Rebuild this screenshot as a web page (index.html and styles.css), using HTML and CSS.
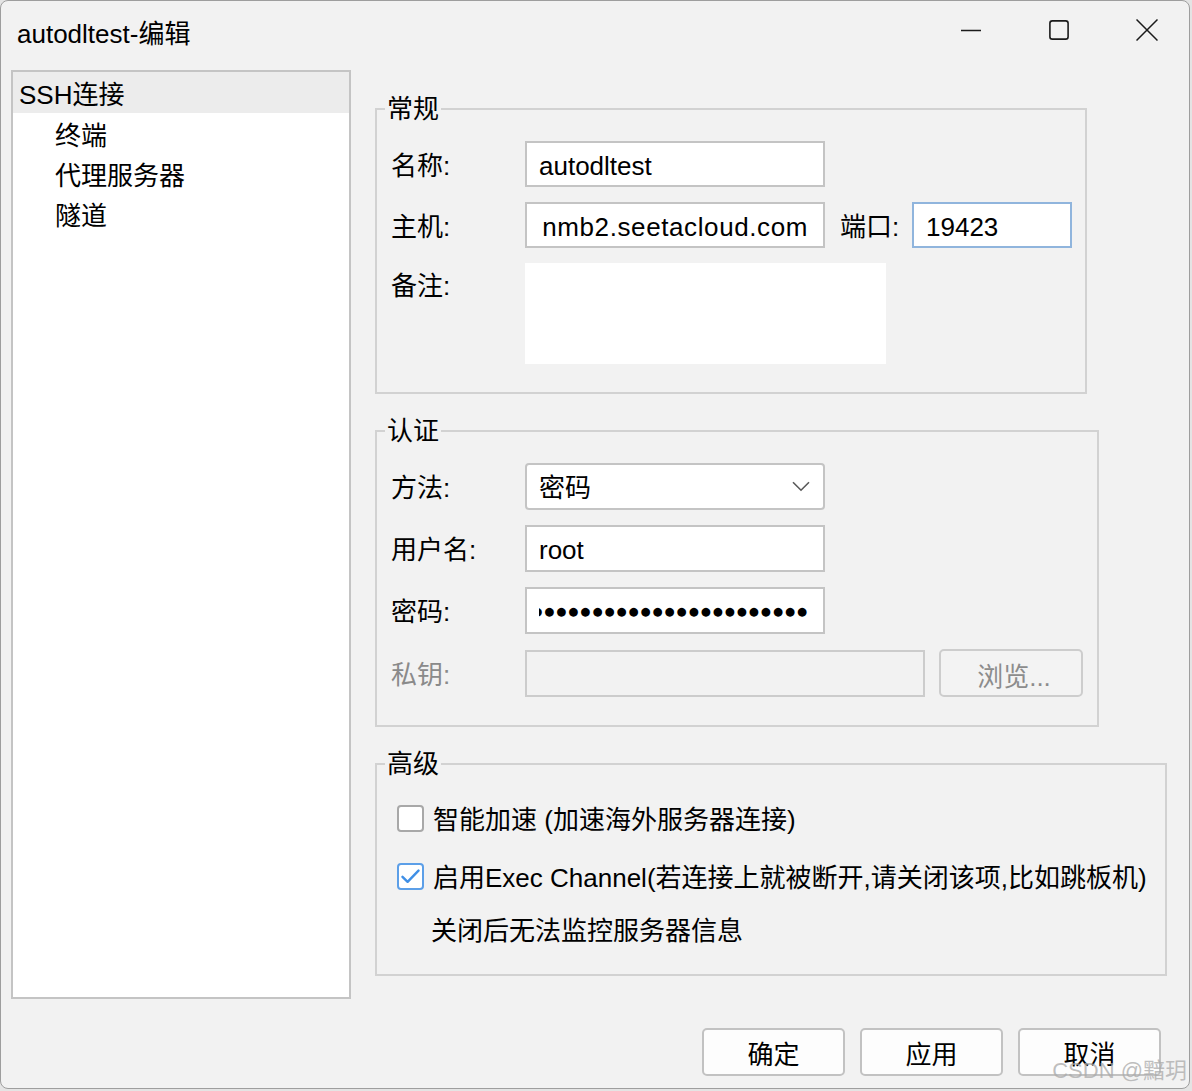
FILE: index.html
```html
<!DOCTYPE html>
<html lang="zh-CN">
<head>
<meta charset="utf-8">
<title>autodltest-编辑</title>
<link rel="stylesheet" href="styles.css">
</head>
<body>
<div class="window">
  <header class="titlebar">
    <div class="title">autodltest-编辑</div>
    <div class="controls">
      <button class="ctl" aria-label="最小化">
        <svg width="20" height="20" viewBox="0 0 20 20"><path d="M0 10.5H20" stroke="#1b1b1b" stroke-width="1.4" fill="none"/></svg>
      </button>
      <button class="ctl" aria-label="最大化">
        <svg width="20" height="20" viewBox="0 0 20 20"><rect x="0.9" y="0.9" width="18.2" height="18.2" rx="2.4" stroke="#1b1b1b" stroke-width="1.6" fill="none"/></svg>
      </button>
      <button class="ctl" aria-label="关闭">
        <svg width="22" height="22" viewBox="0 0 22 22"><path d="M0.5 0.5L21.5 21.5M21.5 0.5L0.5 21.5" stroke="#1b1b1b" stroke-width="1.5" fill="none"/></svg>
      </button>
    </div>
  </header>

  <div class="main">
    <ul class="tree">
      <li class="item selected">SSH连接</li>
      <li class="item sub">终端</li>
      <li class="item sub">代理服务器</li>
      <li class="item sub">隧道</li>
    </ul>

    <div class="settings">
      <fieldset class="group g-general">
        <legend>常规</legend>
        <div class="gbody">
          <div class="row r1">
            <span class="lbl">名称:</span>
            <div class="field w300 h46"><span class="val">autodltest</span></div>
          </div>
          <div class="row r1">
            <span class="lbl">主机:</span>
            <div class="field w300 h46 scrolled"><div class="clip"><span class="val host">nmb2.seetacloud.com</span></div></div>
            <span class="lbl-inline">端口:</span>
            <div class="field port h46"><span class="val">19423</span></div>
          </div>
          <div class="row top">
            <span class="lbl">备注:</span>
            <div class="memo"></div>
          </div>
        </div>
      </fieldset>

      <fieldset class="group g-auth">
        <legend>认证</legend>
        <div class="gbody">
          <div class="row r2">
            <span class="lbl">方法:</span>
            <div class="field w300 h47 combo">
              <span class="val">密码</span>
              <svg class="chev" width="18" height="11" viewBox="0 0 18 11"><path d="M1 1.2L9 9.2L17 1.2" stroke="#5a5a5a" stroke-width="1.6" fill="none"/></svg>
            </div>
          </div>
          <div class="row r2">
            <span class="lbl">用户名:</span>
            <div class="field w300 h47"><span class="val">root</span></div>
          </div>
          <div class="row r2">
            <span class="lbl">密码:</span>
            <div class="field w300 h47 scrolled pwd"><div class="clip"><span class="dots">●●●●●●●●●●●●●●●●●●●●●●●</span></div></div>
          </div>
          <div class="row r2">
            <span class="lbl disabled">私钥:</span>
            <div class="field w400 h47 off"></div>
            <button class="browse">浏览...</button>
          </div>
        </div>
      </fieldset>

      <fieldset class="group g-adv">
        <legend>高级</legend>
        <div class="gbody adv">
          <div class="check c1">
            <span class="box"></span>
            <span class="ctext">智能加速 (加速海外服务器连接)</span>
          </div>
          <div class="check c2">
            <span class="box on">
              <svg width="19" height="15" viewBox="0 0 19 15"><path d="M1.5 7.8L6.6 12.8L17.5 1.6" stroke="#3f8fe6" stroke-width="2.4" fill="none" stroke-linecap="round" stroke-linejoin="round"/></svg>
            </span>
            <span class="ctext">启用Exec Channel(若连接上就被断开,请关闭该项,比如跳板机)</span>
          </div>
          <div class="note">关闭后无法监控服务器信息</div>
        </div>
      </fieldset>
    </div>
  </div>

  <footer class="footer">
    <button class="btn">确定</button>
    <button class="btn">应用</button>
    <button class="btn">取消</button>
  </footer>

  <div class="watermark">CSDN @黯玥</div>
</div>
</body>
</html>
```

FILE: styles.css
```css
* { box-sizing: border-box; }

html, body {
  margin: 0;
  padding: 0;
}

body {
  width: 1192px;
  height: 1091px;
  background: #e4e4e4;
  font-family: "Liberation Sans", "Noto Sans CJK SC", sans-serif;
  font-size: 26px;
  color: #000;
  overflow: hidden;
}

.window {
  position: relative;
  width: 1190px;
  height: 1089px;
  background: #f2f2f2;
  border: 1px solid #9e9e9e;
  border-radius: 8px;
  overflow: hidden;
}

/* title bar */
.titlebar {
  height: 69px;
  display: flex;
  justify-content: space-between;
  align-items: flex-start;
}

.title {
  padding-left: 16px;
  padding-top: 2px;
  line-height: 62px;
  white-space: nowrap;
}

.controls {
  display: flex;
  margin-right: -2px;
}

.ctl {
  width: 88px;
  height: 58px;
  border: 0;
  padding: 0;
  background: transparent;
  display: flex;
  align-items: center;
  justify-content: center;
}

.ctl svg { display: block; }

/* main area */
.main {
  display: flex;
  align-items: flex-start;
  padding-left: 10px;
}

.tree {
  list-style: none;
  margin: 0;
  padding: 0;
  width: 340px;
  height: 929px;
  border: 2px solid #c4c4c4;
  background: #fff;
}

.item {
  height: 40px;
  line-height: 36px;
  padding-left: 6px;
  padding-top: 5px;
  white-space: nowrap;
}

.item.selected {
  height: 41px;
  background: #ececec;
}

.item.sub { padding-left: 42px; }

.settings {
  margin-left: 24px;
  padding-top: 22px;
  display: flex;
  flex-direction: column;
}

/* group boxes */
.group {
  margin: 0;
  border: 2px solid #d2d2d2;
  padding: 0;
  min-width: 0;
}

.group legend {
  margin-left: 8px;
  padding: 1px 2px 0;
  line-height: 33px;
  font-size: 26px;
}

.gbody {
  padding: 15px 0 28px 14px;
}

.gbody.adv {
  padding: 0 0 24px 20px;
}

.g-general { width: 712px; }
.g-auth { width: 724px; margin-top: 20px; }
.g-adv { width: 792px; margin-top: 20px; }

.row {
  display: flex;
  align-items: center;
}

.row.r1 + .row { margin-top: 15px; }
.row.r2 + .row { margin-top: 15px; }
.row.top { align-items: flex-start; }

.lbl {
  width: 134px;
  padding-top: 3px;
  line-height: 34px;
  white-space: nowrap;
}

.row.top .lbl { margin-top: 3px; }

.lbl.disabled { color: #8a8a8a; }

.lbl-inline {
  margin-left: 15px;
  width: 72px;
  padding-top: 3px;
  line-height: 34px;
  white-space: nowrap;
}

.field {
  display: flex;
  align-items: center;
  background: #fff;
  border: 2px solid #c4c4c4;
  padding: 0 12px;
  white-space: nowrap;
  overflow: hidden;
}

.w300 { width: 300px; }
.w400 { width: 400px; }
.h46 { height: 46px; }
.h47 { height: 47px; }

.port {
  width: 160px;
  border-color: #90b5dd;
}

.val {
  padding-top: 3px;
  line-height: 34px;
}

.val.host { letter-spacing: 0.6px; }

.scrolled { padding-right: 15px; }

.clip {
  flex: 1;
  min-width: 0;
  display: flex;
  justify-content: flex-end;
  overflow: hidden;
}

.dots {
  font-family: "DejaVu Sans", sans-serif;
  font-size: 11.5px;
  letter-spacing: 2px;
  line-height: 34px;
}

.pwd { padding-right: 14px; }

.combo {
  border-radius: 4px;
  justify-content: space-between;
  padding-right: 13px;
}

.chev { display: block; }

.off {
  background: transparent;
  border-color: #cccccc;
}

.memo {
  width: 361px;
  height: 101px;
  background: #fff;
}

.browse {
  margin-left: 14px;
  width: 144px;
  height: 48px;
  border: 2px solid #cdcdcd;
  border-radius: 5px;
  background: #f3f3f3;
  color: #8c8c8c;
  font: inherit;
  padding: 3px 0 0 6px;
}

/* advanced checkboxes */
.check {
  display: flex;
  align-items: center;
  height: 40px;
}

.c1 { margin-top: 17px; }
.c2 { margin-top: 18px; }

.box {
  width: 27px;
  height: 27px;
  flex: none;
  border: 2px solid #a8a8a8;
  border-radius: 4px;
  background: #fff;
  display: flex;
  align-items: center;
  justify-content: center;
}

.box.on { border-color: #5c9fe8; }

.ctext {
  margin-left: 9px;
  padding-top: 3px;
  line-height: 34px;
  white-space: nowrap;
}

.note {
  margin-top: 14px;
  margin-left: 34px;
  height: 40px;
  padding-top: 3px;
  line-height: 37px;
  white-space: nowrap;
}

/* footer buttons */
.footer {
  display: flex;
  justify-content: flex-end;
  gap: 15px;
  margin-top: 29px;
  padding-right: 28px;
}

.btn {
  width: 143px;
  height: 48px;
  border: 2px solid #c2c2c2;
  border-radius: 5px;
  background: #fdfdfd;
  font: inherit;
  color: #000;
  padding: 0;
}

.watermark {
  position: absolute;
  right: 2px;
  bottom: 4px;
  font-size: 22px;
  line-height: 26px;
  color: rgba(170, 170, 170, 0.75);
  white-space: nowrap;
}
```
